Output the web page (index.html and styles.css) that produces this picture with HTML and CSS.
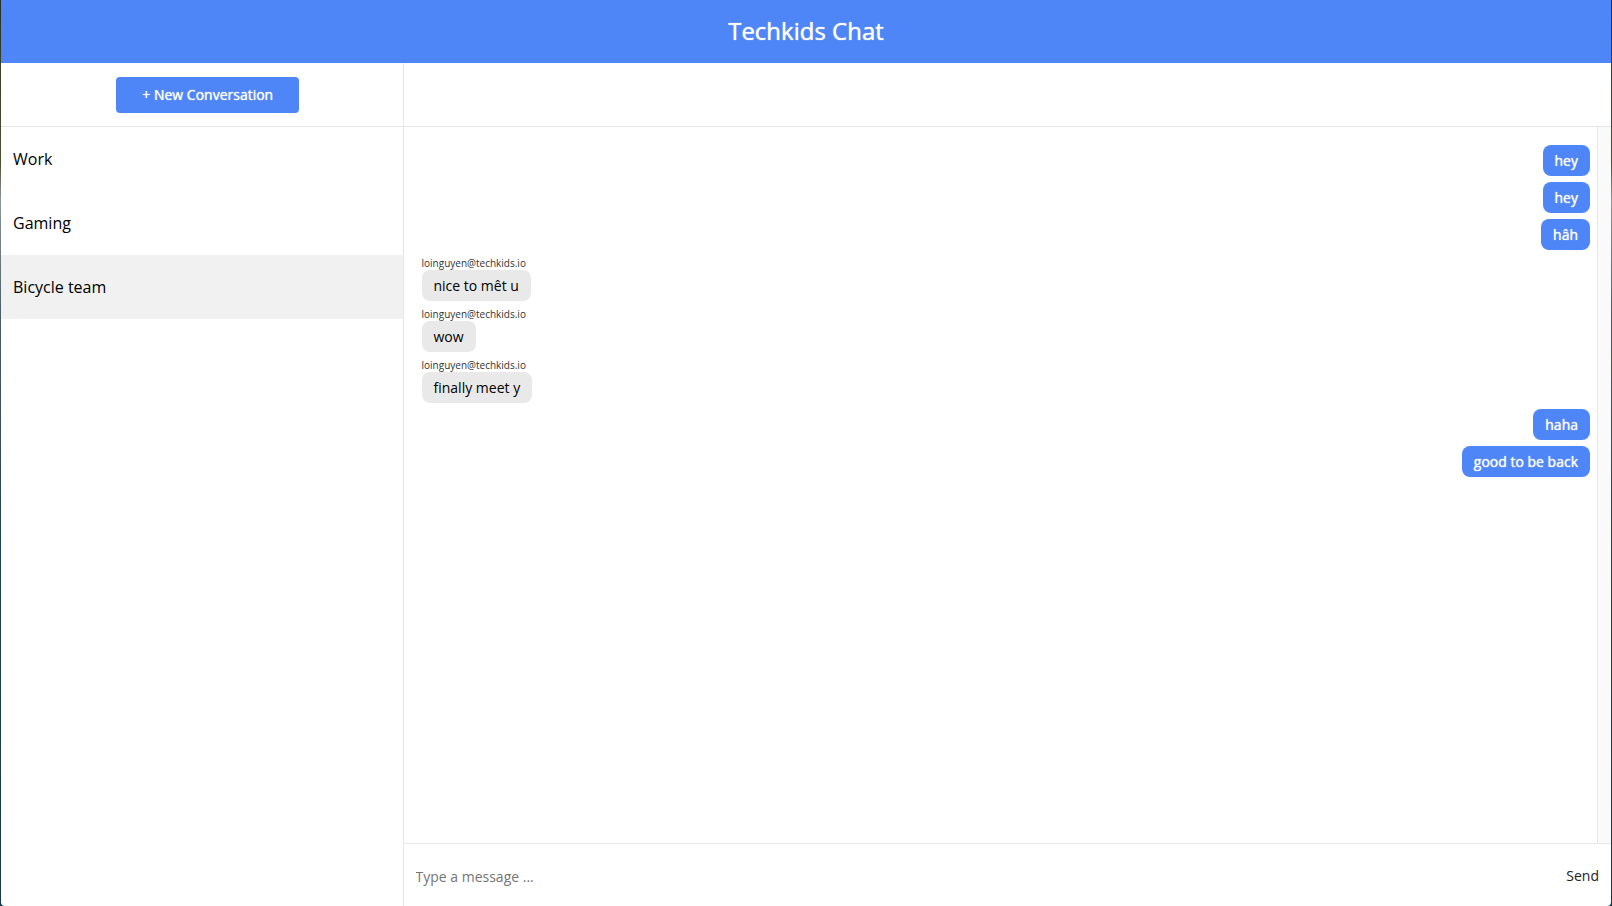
FILE: index.html
```
<!DOCTYPE html>
<html lang="en">
<head>
<meta charset="utf-8">
<title>Techkids Chat</title>
<link rel="stylesheet" href="styles.css">
</head>
<body>
<div class="app">
  <header class="header"><h1 class="title">Techkids Chat</h1></header>
  <div class="main">
    <aside class="sidebar">
      <div class="toolbar"><button class="new-conversation" type="button">+ New Conversation</button></div>
      <nav class="conversations">
        <a class="conversation" href="#work">Work</a>
        <a class="conversation" href="#gaming">Gaming</a>
        <a class="conversation current" href="#bicycle-team" aria-current="page">Bicycle team</a>
      </nav>
    </aside>
    <main class="chat">
      <div class="toolbar"></div>
      <div class="history">
        <div class="messages">
          <div class="message own"><p class="bubble">hey</p></div>
          <div class="message own"><p class="bubble">hey</p></div>
          <div class="message own"><p class="bubble">hâh</p></div>
          <div class="message"><span class="sender">loinguyen@techkids.io</span><p class="bubble">nice to mêt u</p></div>
          <div class="message"><span class="sender">loinguyen@techkids.io</span><p class="bubble">wow</p></div>
          <div class="message"><span class="sender">loinguyen@techkids.io</span><p class="bubble">finally meet y</p></div>
          <div class="message own"><p class="bubble">haha</p></div>
          <div class="message own"><p class="bubble">good to be back</p></div>
        </div>
        <div class="scroll-track"></div>
      </div>
      <form class="composer">
        <input class="composer-input" type="text" aria-label="Message" placeholder="Type a message ...">
        <button class="send" type="button">Send</button>
      </form>
    </main>
  </div>
</div>
</body>
</html>
```
FILE: styles.css
```
* {
  box-sizing: border-box;
}

body {
  margin: 0;
  padding: 0 1px;
  background: linear-gradient(#2b3226 0%, #4a5230 18%, #8e9499 22%, #4b5c66 35%, #1d4259 60%, #173a4c 100%);
  font-family: "Open Sans", "Noto Sans", sans-serif;
  font-size: 16px;
  color: #000;
}

button,
input {
  border: 0;
  font: inherit;
  font-size: 14px;
}

.app {
  display: flex;
  flex-direction: column;
  height: 100vh;
  overflow: hidden;
  border-radius: 0 0 4px 4px;
  background: #fff;
}

.header {
  display: flex;
  align-items: center;
  justify-content: center;
  height: 63px;
  padding-bottom: 2px;
  background: #4f86f7;
  color: #fff;
}

.title {
  margin: 0;
  font-size: 24px;
  font-weight: 400;
  text-shadow: 0 0 1px #fff;
}

.main {
  display: flex;
  flex: 1;
  min-height: 0;
}

.sidebar {
  flex: 0 0 25%;
  border-right: 1px solid #e6e6e6;
}

.toolbar {
  display: flex;
  align-items: center;
  justify-content: center;
  height: 64px;
  padding-left: 12px;
  border-bottom: 1px solid #e6e6e6;
}

.new-conversation {
  height: 36px;
  padding: 0 26px;
  border-radius: 4px;
  background: #4f86f7;
  color: #fff;
  text-shadow: 0 0 1px #fff;
}

.conversation {
  display: flex;
  align-items: center;
  height: 64px;
  padding: 0 12px;
  color: inherit;
  text-decoration: none;
}

.current {
  background: #f1f1f1;
}

.chat {
  display: flex;
  flex: 1;
  flex-direction: column;
  min-width: 0;
}

.history {
  display: flex;
  flex: 1;
  min-height: 0;
}

.messages {
  display: flex;
  flex: 1;
  flex-direction: column;
  gap: 6px;
  padding: 18px 7px 18px 18px;
}

.message {
  display: flex;
  flex-direction: column;
  align-items: flex-start;
}

.sender {
  font-size: 10px;
  line-height: 14px;
  color: #333;
}

.bubble {
  margin: 0;
  padding: 6px 12px;
  border-radius: 8px;
  background: #e9e9e9;
  font-size: 14px;
  line-height: 19px;
}

.own {
  align-items: flex-end;
}

.own .bubble {
  background: #4f86f7;
  color: #fff;
  text-shadow: 0 0 1px #fff;
}

.scroll-track {
  width: 14px;
  border-left: 1px solid #e6e6e6;
  background: #fafafa;
}

.composer {
  display: flex;
  height: 63px;
  border-top: 1px solid #e6e6e6;
}

.composer-input {
  flex: 1;
  min-width: 0;
  padding: 2px 12px 0;
  background: transparent;
  outline: 0;
}

.composer-input::placeholder {
  color: #757575;
}

.send {
  padding: 0 12px;
  background: transparent;
  color: #222;
}
```
